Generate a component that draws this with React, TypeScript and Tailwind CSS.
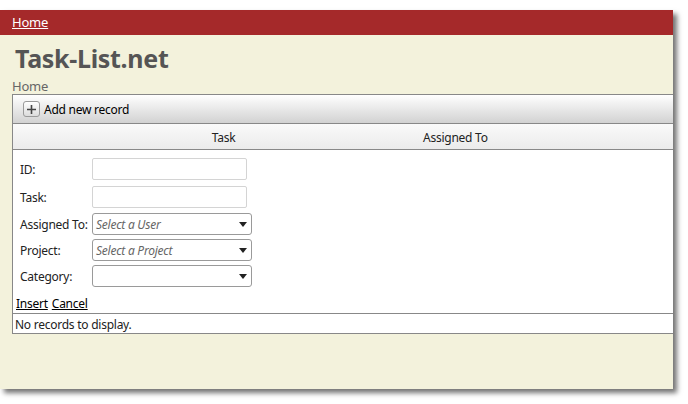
const FONT = { fontFamily: '"Noto Sans", "Open Sans", sans-serif' };

function TextField({ label }: { label: string }) {
  return (
    <div className="flex items-center h-[24px]">
      <label className="w-[72px] pt-[2px] text-[12px] tracking-[-0.25px] text-[#222]">{label}</label>
      <input
        className="h-[22px] w-[155px] border border-[#d4d4d4] rounded-[2px] bg-white outline-none px-1 text-[12px]"
        type="text"
      />
    </div>
  );
}

function SelectField({ label, placeholder }: { label: string; placeholder: string }) {
  return (
    <div className="flex items-center h-[22px]">
      <label className="w-[72px] pt-[2px] text-[12px] tracking-[-0.25px] text-[#222]">{label}</label>
      <div className="h-[22px] w-[160px] border border-[#9a9a9a] rounded-[3px] bg-white flex items-center justify-between pl-[3px] pr-[4px]">
        <span className="pt-[1px] text-[12px] tracking-[-0.25px] italic text-[#666]">{placeholder}</span>
        <svg width="8" height="5" viewBox="0 0 8 5">
          <path d="M0 0h8L4 5z" fill="#222" />
        </svg>
      </div>
    </div>
  );
}

export default function App() {
  return (
    <div className="w-[688px] h-[404px] bg-white pt-[10px]" style={FONT}>
      <div className="w-[673px] h-[379px] bg-[#f3f2dc] shadow-[4px_4px_5px_rgba(0,0,0,0.55)] flex flex-col">
        {/* top nav */}
        <div className="h-[25px] bg-[#a5292a] flex items-center px-[12px]">
          <a href="#" className="text-white underline text-[13px] tracking-[-0.2px]">Home</a>
        </div>

        {/* title */}
        <h1 className="h-[43px] pl-[15px] pt-[6px] text-[25px] font-bold text-[#555] leading-[34px] tracking-[-0.3px]">
          Task-List.net
        </h1>
        <div className="h-[16px] pl-[12px] text-[13px] leading-[16px] text-[#666] tracking-[-0.2px]">Home</div>

        {/* grid */}
        <div className="ml-[12px] border border-r-0 border-[#888] bg-white text-[12px] tracking-[-0.25px]">
          <div className="h-[28px] bg-gradient-to-b from-white to-[#d2d2d2] flex items-center pl-[10px] gap-[4px]">
            <span className="w-[17px] h-[16px] rounded-[3px] border border-[#9a9a9a] bg-gradient-to-b from-white to-[#dcdcdc] flex items-center justify-center">
              <svg width="9" height="9" viewBox="0 0 9 9">
                <path d="M3.7 0h1.6v3.7H9v1.6H5.3V9H3.7V5.3H0V3.7h3.7z" fill="#444" />
              </svg>
            </span>
            <span className="pt-[2px] text-black">Add new record</span>
          </div>

          <div className="h-[27px] pt-[2px] border-t border-b border-[#888] bg-gradient-to-b from-[#fafafa] to-[#ebebeb] flex items-center text-[#222]">
            <div className="w-[400px] pl-[21px] text-center">Task</div>
            <div className="pl-[10px]">Assigned To</div>
          </div>

          <div className="pt-[7px] pl-[7px] flex flex-col gap-[4px]">
            <TextField label="ID:" />
            <TextField label="Task:" />
            <SelectField label="Assigned To:" placeholder="Select a User" />
            <SelectField label="Project:" placeholder="Select a Project" />
            <SelectField label="Category:" placeholder="" />
          </div>
          <div className="pl-[3px] pt-[8px] pb-[1px] h-[26px] text-black flex gap-[4px]">
            <a href="#" className="underline">Insert</a>
            <a href="#" className="underline">Cancel</a>
          </div>

          <div className="border-t border-[#888] h-[20px] pl-[2px] pt-[1px] leading-[19px] text-[#222]">
            No records to display.
          </div>
        </div>
      </div>
    </div>
  );
}
